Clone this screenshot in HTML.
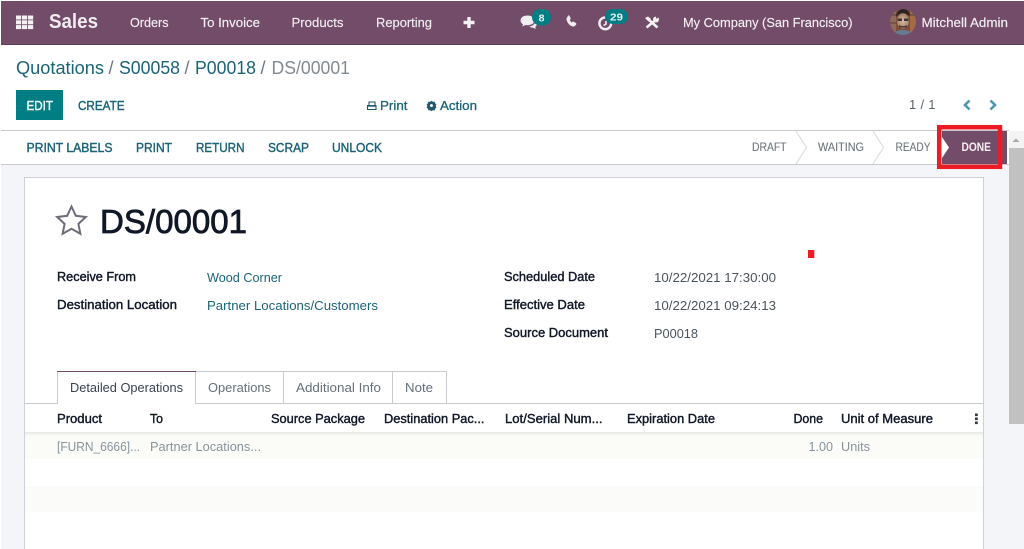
<!DOCTYPE html>
<html lang="en">
<head>
<meta charset="utf-8">
<title>DS/00001</title>
<style>
html,body{margin:0;padding:0;width:1024px;height:549px;overflow:hidden;background:#fff}
svg{display:block}
text{font-family:"Liberation Sans",Arial,sans-serif;white-space:pre}
.n{font-size:13px;fill:#f3eff2;stroke:#f3eff2;stroke-width:.15px}
.l{fill:#1b6478}
.b{stroke:#1b6478;stroke-width:.4px}
.h{font-size:12.5px;fill:#111827;stroke:#111827;stroke-width:.4px}
.g{font-size:13px;fill:#88939c}
.v{font-size:13px;fill:#4b545c}
.s{font-size:11.5px;fill:#6f787e;stroke:#6f787e;stroke-width:.12px}
.t{font-size:13px;fill:#66707a}
</style>
</head>
<body>
<svg width="1024" height="549" viewBox="0 0 1024 549" xmlns="http://www.w3.org/2000/svg">
<rect width="1024" height="549" fill="#fff"/>

<!-- nav -->
<rect x="1" y="1" width="1023" height="43" fill="#724c68"/>
<rect x="1" y="44" width="1023" height="1" fill="#5b4056"/>
<g fill="#f4f0f3">
<rect x="16" y="15.500" width="5.200" height="4"/><rect x="22" y="15.500" width="5.200" height="4"/><rect x="28" y="15.500" width="5.200" height="4"/>
<rect x="16" y="20.300" width="5.200" height="4"/><rect x="22" y="20.300" width="5.200" height="4"/><rect x="28" y="20.300" width="5.200" height="4"/>
<rect x="16" y="25.100" width="5.200" height="4"/><rect x="22" y="25.100" width="5.200" height="4"/><rect x="28" y="25.100" width="5.200" height="4"/>
</g>
<text x="49" y="28" font-size="20" font-weight="bold" fill="#f1ecf0" textLength="49" lengthAdjust="spacingAndGlyphs">Sales</text>
<text class="n" x="130" y="27" textLength="38.5" lengthAdjust="spacingAndGlyphs">Orders</text>
<text class="n" x="200.500" y="27" textLength="59.500" lengthAdjust="spacingAndGlyphs">To Invoice</text>
<text class="n" x="291.500" y="27" textLength="52" lengthAdjust="spacingAndGlyphs">Products</text>
<text class="n" x="376" y="27" textLength="56" lengthAdjust="spacingAndGlyphs">Reporting</text>
<path d="M467.300 17h3.400v3.800h3.800v3.400h-3.800V28h-3.400v-3.800h-3.800v-3.400h3.800z" fill="#f4f0f3"/>

<!-- comments icon -->
<path d="M527.500 15.500c-4 0-7 2.100-7 4.900 0 1.600 1 3 2.500 3.800l-.8 2.400 3.200-1.600c.7.100 1.400.2 2.100.2 4 0 7-2.100 7-4.800s-3-4.900-7-4.900z" fill="#f1ecf0"/>
<path d="M535 21.500c0 2.800-2.600 4.700-5.800 5 1 .9 2.400 1.300 3.800 1.200l2.800 1.300-.6-2.100c1-.7 1.700-1.700 1.700-2.800 0-1-.8-1.900-1.900-2.600z" fill="#f1ecf0"/>
<rect x="532" y="9" width="19" height="16.500" rx="8.250" fill="#017e84"/>
<text x="541.500" y="21.500" font-size="10.500" font-weight="bold" fill="#e6f3f3" text-anchor="middle">8</text>

<!-- phone -->
<path d="M567.500 17.500c-.6.500-.8 1.500-.5 2.500.7 2.700 2.800 5 5.300 6 .9.300 1.900.2 2.400-.4l1.200-1.300c.3-.3.200-.7-.2-1l-2.100-1.300c-.3-.2-.7-.2-1 .1l-.8.800c-1.100-.6-2-1.700-2.500-2.900l.8-.8c.3-.3.300-.6.200-1l-1.100-2.100c-.2-.4-.7-.5-1-.2z" fill="#f1ecf0" stroke="#f1ecf0" stroke-width=".7"/>

<!-- activity clock -->
<circle cx="605.300" cy="23.300" r="5.900" fill="none" stroke="#f1ecf0" stroke-width="2.400"/>
<path d="M606 21v3l-2.500 1.500" fill="none" stroke="#f1ecf0" stroke-width="1.600"/>
<rect x="605" y="9" width="23" height="15" rx="7.500" fill="#017e84"/>
<text x="616.500" y="20.500" font-size="10.500" font-weight="bold" fill="#e6f3f3" text-anchor="middle" textLength="13" lengthAdjust="spacingAndGlyphs">29</text>

<!-- tools -->
<path d="M648 19l9.500 8.500" stroke="#f6f3f5" stroke-width="2.600" fill="none"/>
<path d="M655 20.500l-8.500 7" stroke="#f6f3f5" stroke-width="2.600" fill="none"/>
<path d="M645 18l3-1.500 3 2.500-2.500 2.500z" fill="#f6f3f5"/>
<circle cx="656" cy="19.500" r="3" fill="#f6f3f5"/>
<path d="M656.500 19l3-3h-4z" fill="#724c68"/>

<text class="n" x="683" y="27" textLength="169.500" lengthAdjust="spacingAndGlyphs">My Company (San Francisco)</text>

<!-- avatar -->
<defs>
<clipPath id="av"><circle cx="903" cy="22" r="13"/></clipPath>
<radialGradient id="fc" cx=".5" cy=".5" r=".5"><stop offset="0" stop-color="#d8b8a0"/><stop offset="1" stop-color="#a8826a"/></radialGradient>
</defs>
<g clip-path="url(#av)">
<rect x="889" y="8" width="28" height="28" fill="#7d4f3a"/>
<rect x="889" y="8" width="7" height="28" fill="#8f6b5a"/>
<rect x="910" y="8" width="7" height="28" fill="#a36a45"/>
<rect x="889" y="14" width="28" height="2" fill="#5e4038" opacity=".5"/>
<rect x="889" y="22" width="8" height="2" fill="#5e4038" opacity=".5"/>
<ellipse cx="903" cy="21" rx="6" ry="7.500" fill="url(#fc)"/>
<path d="M896 17c0-5 4-8 7-8s7 2 7 7c-3-2-5-3-7-3s-5 1-7 4z" fill="#2b2226"/>
<rect x="897.500" y="18.500" width="4.500" height="2.500" fill="#3f363b"/><rect x="904" y="18.500" width="4.500" height="2.500" fill="#3f363b"/>
<path d="M899 25c2 1.500 6 1.500 8 0v2.500h-8z" fill="#4b3a38"/>
<path d="M893 36c1-5 5-6 10-6s9 1 10 6z" fill="#667a92"/>
</g>
<text class="n" x="921.500" y="27" textLength="86.500" lengthAdjust="spacingAndGlyphs">Mitchell Admin</text>

<!-- breadcrumb -->
<g font-size="18">
<text class="l" x="16" y="74" textLength="88" lengthAdjust="spacingAndGlyphs">Quotations</text>
<text x="108.500" y="74" fill="#6b7680">/</text>
<text class="l" x="119" y="74" textLength="61" lengthAdjust="spacingAndGlyphs">S00058</text>
<text x="184.500" y="74" fill="#6b7680">/</text>
<text class="l" x="195" y="74" textLength="61" lengthAdjust="spacingAndGlyphs">P00018</text>
<text x="260.500" y="74" fill="#6b7680">/</text>
<text x="271.500" y="74" fill="#838a91" textLength="78.500" lengthAdjust="spacingAndGlyphs">DS/00001</text>
</g>

<!-- control panel -->
<rect x="16" y="90" width="47" height="30" fill="#017e84"/>
<text x="26.500" y="110" font-size="12.500" fill="#f2fafa" stroke="#f2fafa" stroke-width=".45" textLength="26.500" lengthAdjust="spacingAndGlyphs">EDIT</text>
<text class="l b" x="78" y="110" font-size="12.500" textLength="46.500" lengthAdjust="spacingAndGlyphs">CREATE</text>
<path d="M369 105v-3h6v3" fill="none" stroke="#22596f" stroke-width="1.100"/>
<rect x="367" y="105" width="9.500" height="1.700" fill="#22596f"/>
<path d="M367.500 106.500v3h8.500v-3" fill="none" stroke="#22596f" stroke-width="1.100"/>
<text class="l" x="380" y="110" font-size="13" textLength="27.500" lengthAdjust="spacingAndGlyphs" stroke="#1b6478" stroke-width=".3">Print</text>
<path d="M431.500 100.800l1.400 1 1.700-.2.500 1.700 1.300 1.100-.7 1.600.7 1.600-1.300 1.100-.5 1.700-1.700-.2-1.400 1-1.400-1-1.700.2-.5-1.700-1.300-1.100.7-1.600-.7-1.600 1.300-1.100.5-1.700 1.700.2z M431.500 104a1.500 1.500 0 1 0 .01 0z" fill="#22596f" fill-rule="evenodd"/>
<text class="l" x="440" y="110" font-size="13" textLength="37" lengthAdjust="spacingAndGlyphs" stroke="#1b6478" stroke-width=".3">Action</text>
<text x="909" y="109" font-size="13" fill="#5a646c" textLength="26.500" lengthAdjust="spacing">1 / 1</text>
<path d="M969.500 100.500l-4.500 4.500 4.500 4.500" fill="none" stroke="#4f97ad" stroke-width="2.600"/>
<path d="M990.500 100.500l4.500 4.500-4.500 4.500" fill="none" stroke="#4f97ad" stroke-width="2.600"/>

<!-- status bar -->
<rect x="1" y="165" width="1008" height="384" fill="#f4f5f9"/>
<rect x="1" y="130" width="1008" height="1" fill="#c9c9d2"/>
<rect x="1" y="164" width="1008" height="1" fill="#c9c9d2"/>
<g class="l b" font-size="12.500">
<text x="26.500" y="152" textLength="86" lengthAdjust="spacingAndGlyphs">PRINT LABELS</text>
<text x="136" y="152" textLength="36" lengthAdjust="spacingAndGlyphs">PRINT</text>
<text x="196" y="152" textLength="48.500" lengthAdjust="spacingAndGlyphs">RETURN</text>
<text x="268" y="152" textLength="41" lengthAdjust="spacingAndGlyphs">SCRAP</text>
<text x="332" y="152" textLength="50" lengthAdjust="spacingAndGlyphs">UNLOCK</text>
</g>
<text class="s" x="752" y="151" textLength="34.500" lengthAdjust="spacingAndGlyphs">DRAFT</text>
<path d="M796 131l10.500 16.500L796 164" fill="none" stroke="#d8d8dd"/>
<text class="s" x="818" y="151" textLength="46" lengthAdjust="spacingAndGlyphs">WAITING</text>
<path d="M873 131l10.500 16.500L873 164" fill="none" stroke="#d8d8dd"/>
<text class="s" x="895.500" y="151" textLength="35" lengthAdjust="spacingAndGlyphs">READY</text>
<rect x="942" y="131" width="65" height="33" fill="#724c68"/>
<path d="M942 137l7 10.500-7 10.500z" fill="#fff"/>
<text x="961.500" y="151" font-size="11.500" font-weight="bold" fill="#f3eff2" textLength="29.500" lengthAdjust="spacingAndGlyphs">DONE</text>
<rect x="939.200" y="127.200" width="60.800" height="39.600" fill="none" stroke="#ed1c24" stroke-width="4.500"/>

<!-- scrollbar -->
<rect x="1009" y="131" width="15" height="418" fill="#f4f5f9"/>
<rect x="1009" y="131" width="15" height="17" fill="#f3f3f3"/>
<path d="M1012.500 142l3.500-3.500 3.500 3.500z" fill="#a8a8a8"/>
<rect x="1009" y="148" width="15" height="276" fill="#c1c1c1"/>

<!-- sheet -->
<rect x="24.500" y="177.500" width="959" height="380" fill="#fff" stroke="#cfd0d8"/>
<path d="M71.500 206.500l4.300 9.300 10 1.200-7.400 6.900 2 9.900-8.900-5-8.900 5 2-9.900-7.400-6.900 10-1.200z" fill="none" stroke="#6c6d78" stroke-width="2"/>
<text x="100" y="233" font-size="33" fill="#101828" stroke="#101828" stroke-width=".8" textLength="147" lengthAdjust="spacingAndGlyphs">DS/00001</text>

<rect x="808" y="250" width="6.300" height="8" fill="#ed1c24"/>

<text class="h" x="57" y="281" textLength="79" lengthAdjust="spacingAndGlyphs">Receive From</text>
<text class="h" x="57" y="309" textLength="120" lengthAdjust="spacingAndGlyphs">Destination Location</text>
<text class="l" x="207" y="282" font-size="13" textLength="75" lengthAdjust="spacingAndGlyphs">Wood Corner</text>
<text class="l" x="207" y="310" font-size="13" textLength="171" lengthAdjust="spacingAndGlyphs">Partner Locations/Customers</text>

<text class="h" x="504" y="281" textLength="91" lengthAdjust="spacingAndGlyphs">Scheduled Date</text>
<text class="h" x="504" y="309" textLength="81" lengthAdjust="spacingAndGlyphs">Effective Date</text>
<text class="h" x="504" y="337" textLength="104" lengthAdjust="spacingAndGlyphs">Source Document</text>
<text class="v" x="654" y="282" textLength="122" lengthAdjust="spacingAndGlyphs">10/22/2021 17:30:00</text>
<text class="v" x="654" y="310" textLength="122" lengthAdjust="spacingAndGlyphs">10/22/2021 09:24:13</text>
<text class="v" x="654" y="338" textLength="44" lengthAdjust="spacingAndGlyphs">P00018</text>

<!-- tabs -->
<rect x="25" y="403" width="958" height="1" fill="#c9c9d2"/>
<path d="M195.500 403V371.500H446.500V403M283.500 371.500V403M392.500 371.500V403" fill="none" stroke="#c9c9d2"/>
<rect x="57" y="372" width="138" height="33" fill="#fff"/>
<path d="M57.500 404V371.500H195.500V404" fill="none" stroke="#c9c9d2"/>
<rect x="57" y="371" width="139" height="1" fill="#724c68"/>
<text x="70" y="392" font-size="13" fill="#3a4450" textLength="113" lengthAdjust="spacingAndGlyphs">Detailed Operations</text>
<text class="t" x="208" y="392" textLength="63" lengthAdjust="spacingAndGlyphs">Operations</text>
<text class="t" x="296" y="392" textLength="85" lengthAdjust="spacingAndGlyphs">Additional Info</text>
<text class="t" x="405" y="392" textLength="28" lengthAdjust="spacingAndGlyphs">Note</text>

<!-- table -->
<defs><linearGradient id="sh" x1="0" y1="0" x2="0" y2="1"><stop offset="0" stop-color="#e6e6e6"/><stop offset="1" stop-color="#fbfbf8"/></linearGradient></defs>
<rect x="25" y="432" width="958" height="27" fill="#fbfbf8"/>
<rect x="25" y="432" width="958" height="4" fill="url(#sh)"/>
<rect x="25" y="486" width="958" height="26" fill="#fbfbf9"/>
<text class="h" x="57" y="423" textLength="45" lengthAdjust="spacingAndGlyphs">Product</text>
<text class="h" x="150" y="423" textLength="13" lengthAdjust="spacingAndGlyphs">To</text>
<text class="h" x="271" y="423" textLength="94" lengthAdjust="spacingAndGlyphs">Source Package</text>
<text class="h" x="384" y="423" textLength="100.500" lengthAdjust="spacingAndGlyphs">Destination Pac...</text>
<text class="h" x="505" y="423" textLength="97.500" lengthAdjust="spacingAndGlyphs">Lot/Serial Num...</text>
<text class="h" x="627" y="423" textLength="88" lengthAdjust="spacingAndGlyphs">Expiration Date</text>
<text class="h" x="793.500" y="423" textLength="29.500" lengthAdjust="spacingAndGlyphs">Done</text>
<text class="h" x="841" y="423" textLength="92" lengthAdjust="spacingAndGlyphs">Unit of Measure</text>
<rect x="975" y="413.500" width="2.800" height="2.600" fill="#333a45"/>
<rect x="975" y="417.500" width="2.800" height="2.600" fill="#333a45"/>
<rect x="975" y="421.500" width="2.800" height="2.600" fill="#333a45"/>
<text class="g" x="57" y="451" textLength="83" lengthAdjust="spacingAndGlyphs">[FURN_6666]...</text>
<text class="g" x="150" y="451" textLength="111" lengthAdjust="spacingAndGlyphs">Partner Locations...</text>
<text class="g" x="808.500" y="451" textLength="24.500" lengthAdjust="spacingAndGlyphs">1.00</text>
<text class="g" x="841" y="451" textLength="29" lengthAdjust="spacingAndGlyphs">Units</text>
</svg>
</body>
</html>
